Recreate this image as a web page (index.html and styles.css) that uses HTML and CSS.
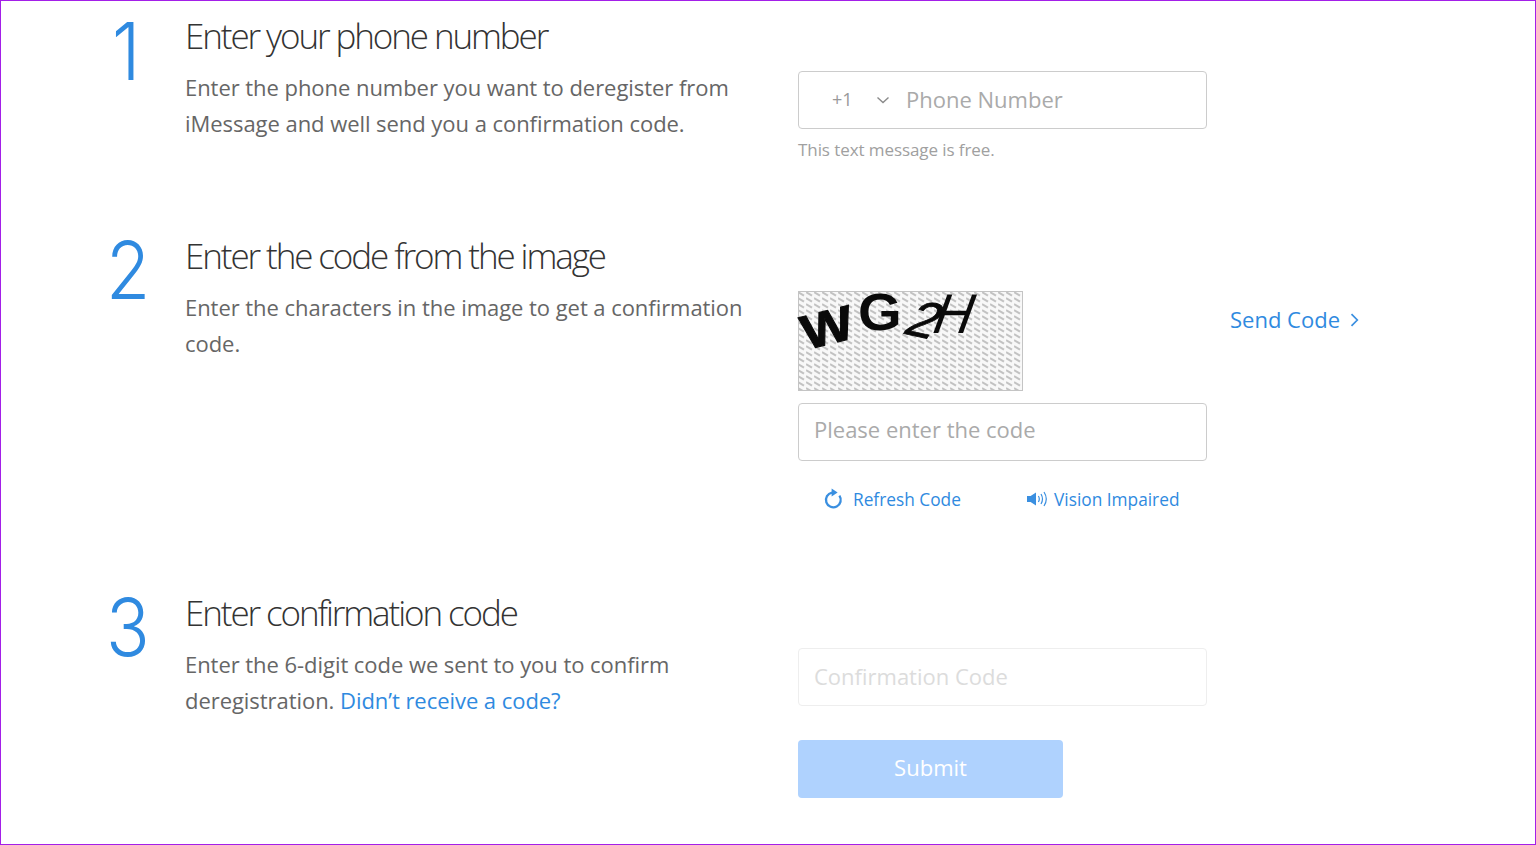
FILE: index.html
```html
<!DOCTYPE html>
<html lang="en">
  <head>
    <meta charset="UTF-8" />
    <title>Deregister iMessage</title>
    <link rel="stylesheet" href="styles.css">
  </head>
  <body>
    <div class="page">
      <section class="step step-one">
        <div class="num">1</div>
        <div class="copy">
          <h2>Enter your phone number</h2>
          <p>Enter the phone number you want to deregister from iMessage and well send you a confirmation code.</p>
        </div>
        <div class="form">
          <div class="field phone">
            <span class="code">+1</span>
            <svg class="caret" width="14" height="8" viewBox="0 0 14 8"><path d="M1.5 1.5 7 6.5l5.5-5" fill="none" stroke="#8a8a8a" stroke-width="1.4"/></svg>
            <input type="text" placeholder="Phone Number">
          </div>
          <div class="hint">This text message is free.</div>
        </div>
      </section>

      <section class="step step-two">
        <div class="num">2</div>
        <div class="copy">
          <h2>Enter the code from the image</h2>
          <p>Enter the characters in the image to get a confirmation code.</p>
        </div>
        <div class="form">
          <svg class="captcha" width="225" height="100" viewBox="0 0 225 100">
            <defs>
              <pattern id="hatch" width="8" height="6" patternUnits="userSpaceOnUse">
                <rect width="8" height="6" fill="#f8f8f8"/>
                <path d="M0 1.2 6 4.6" stroke="#c2c2c2" stroke-width="2"/>
              </pattern>
            </defs>
            <rect width="225" height="100" fill="url(#hatch)"/>
            <rect x=".5" y=".5" width="224" height="99" fill="none" stroke="#c4c4c4"/>
            <g font-family="Liberation Sans, sans-serif" fill="#0a0a0a">
              <text transform="translate(8 59) rotate(-14) scale(1.2 1.05)" font-size="46" font-weight="700" stroke="#0a0a0a" stroke-width="1">W</text>
              <text transform="translate(60 39) scale(1.08 1)" font-size="52" font-weight="700">G</text>
              <text transform="translate(103 42) rotate(12) skewX(-20)" font-size="52" stroke="#0a0a0a" stroke-width=".9">2</text>
              <text transform="translate(131 42) skewX(-20) scale(.95 1)" font-size="56">H</text>
            </g>
          </svg>
          <input class="field wide" type="text" placeholder="Please enter the code">
          <div class="links">
            <a class="refresh" href="#">
              <svg width="20" height="22" viewBox="0 0 20 22"><path d="M16.4 7.6A7.4 7.4 0 1 1 9 4.6" fill="none" stroke="#3a8fe0" stroke-width="2.3"/><path d="M8.6 .6 14.6 4.6 8.6 8.6z" fill="#3a8fe0"/></svg>
              Refresh Code
            </a>
            <a class="vision" href="#">
              <svg width="23" height="18" viewBox="0 0 23 18"><path d="M1 6h3.6L10 2.4v13.2L4.6 12H1z" fill="#3a8fe0"/><path d="M12.4 6q1.8 3 0 6M15 4q3 5 0 10M18 2q4.6 7 0 14" fill="none" stroke="#3a8fe0" stroke-width="1.2"/></svg>
              Vision Impaired
            </a>
          </div>
        </div>
        <a class="send" href="#">Send Code
          <svg width="9" height="14" viewBox="0 0 9 14"><path d="M1.5 1.2 7.3 7l-5.8 5.8" fill="none" stroke="#3a8fe0" stroke-width="1.7"/></svg>
        </a>
      </section>

      <section class="step step-three">
        <div class="num">3</div>
        <div class="copy">
          <h2>Enter confirmation code</h2>
          <p>Enter the 6-digit code we sent to you to confirm deregistration. <a href="#">Didn’t receive a code?</a></p>
        </div>
        <div class="form">
          <input class="field wide off" type="text" placeholder="Confirmation Code" disabled>
          <button class="submit" disabled>Submit</button>
        </div>
      </section>
    </div>
  </body>
</html>
```

FILE: styles.css
```css
* {
  box-sizing: border-box;
}

body {
  margin: 0;
  background: #fff;
  font-family: "Open Sans", sans-serif;
  color: #666;
  overflow: hidden;
}

a {
  color: #2f8ae0;
  text-decoration: none;
}

.page {
  height: 845px;
  border: 1px solid #a31fe8;
  padding-left: 108px;
}

.step {
  display: grid;
  grid-template-columns: 76px 613px 432px 1fr;
}

.step-one {
  height: 220px;
}

.step-two {
  height: 357px;
}

.num {
  font-family: Inter, sans-serif;
  font-weight: 300;
  font-size: 80px;
  line-height: 100px;
  color: #2f8ae0;
  transform: scaleX(0.9);
  transform-origin: left;
}

.step-one .num {
  margin-left: 3px;
}

.step-two .num,
.step-three .num {
  margin: -1px 0 0 -3px;
}

h2 {
  margin: 13px 0 0;
  font-weight: 300;
  font-size: 35px;
  line-height: 44px;
  letter-spacing: -2.1px;
  color: #333;
}

.copy p {
  margin: 11px 0 0;
  width: 565px;
  font-size: 22px;
  line-height: 36px;
  letter-spacing: -0.05px;
}

.form {
  padding-top: 70px;
  width: 409px;
}

.field {
  display: block;
  width: 409px;
  height: 58px;
  border: 1px solid #ccc;
  border-radius: 4px;
  background: #fff;
  font-family: inherit;
  font-size: 22px;
  padding: 0 15px 6px;
  outline: none;
}

.phone {
  display: flex;
  align-items: center;
  padding: 0 16px 0 33px;
}

.phone .code {
  font-size: 18px;
  color: #999;
  width: 44px;
  margin-bottom: 2px;
}

.phone input {
  border: 0;
  outline: none;
  flex: 1;
  margin-left: 16px;
  padding: 0 0 2px;
  font-family: inherit;
  font-size: 22px;
  min-width: 0;
}

input::placeholder {
  color: #aaa;
  opacity: 1;
}

.hint {
  margin-top: 8px;
  font-size: 17px;
  line-height: 26px;
  letter-spacing: -0.08px;
  color: #a0a0a0;
}

.captcha {
  display: block;
  overflow: visible;
}

.wide {
  margin-top: 12px;
}

.links {
  display: flex;
  margin-top: 26px;
  padding-left: 25px;
  font-size: 17.3px;
  line-height: 26px;
}

.links a {
  display: flex;
  align-items: center;
}

.links svg {
  margin-top: -3px;
}

.refresh {
  gap: 10px;
  width: 203px;
}

.vision {
  gap: 5px;
}

.send {
  margin-top: 81px;
  font-size: 22px;
  line-height: 34px;
  white-space: nowrap;
  display: flex;
  align-items: center;
  gap: 10px;
  height: 34px;
}

.send svg {
  margin-top: 2px;
}

.off {
  margin-top: 0;
  border-color: #eee;
  padding-bottom: 2px;
}

.off::placeholder {
  color: #dcdcdc;
}

.submit {
  display: block;
  margin-top: 34px;
  width: 265px;
  height: 58px;
  border: 0;
  border-radius: 4px;
  padding: 0 0 4px;
  background: #afd2fe;
  color: #fff;
  font-family: inherit;
  font-size: 22px;
}
```
